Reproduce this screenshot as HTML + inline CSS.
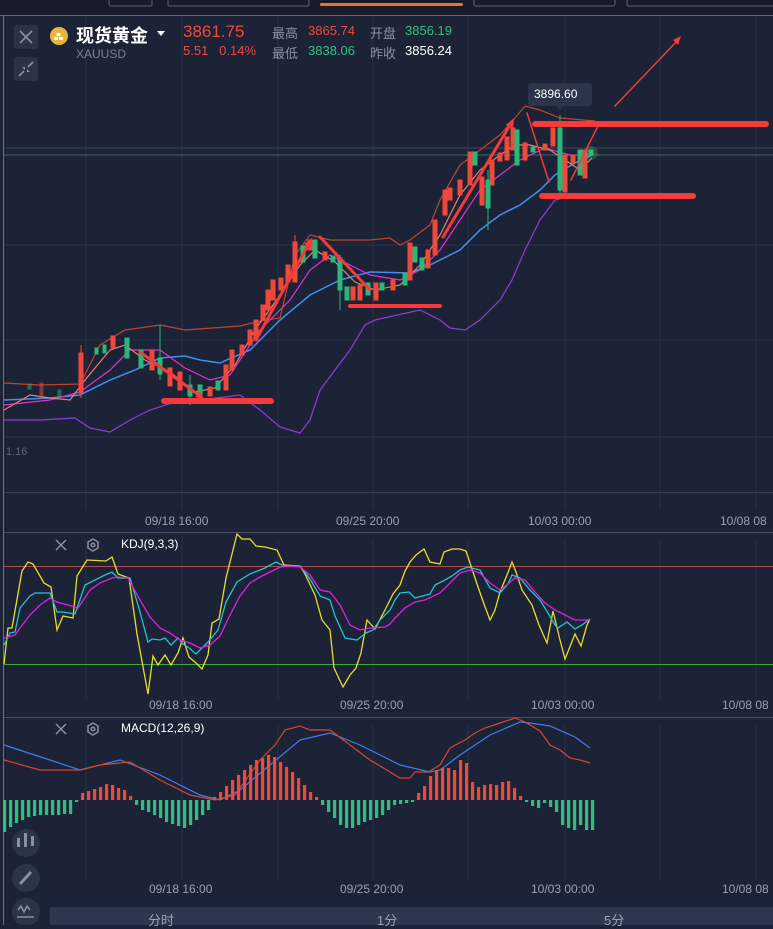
<!DOCTYPE html>
<html><head><meta charset="utf-8"><style>
*{margin:0;padding:0;box-sizing:border-box}
body{width:773px;height:925px;overflow:hidden;background:#1d2336;font-family:"Liberation Sans","Noto Sans CJK SC",sans-serif;position:relative}
.a{position:absolute;white-space:nowrap}
</style></head><body>
<svg class="a" style="left:0;top:0" width="773" height="925" xmlns="http://www.w3.org/2000/svg">
<rect x="0" y="0" width="773" height="15" fill="#181c2a"/>
<g fill="none" stroke="#4d5468" stroke-width="1.3">
<path d="M109 0V4a2 2 0 0 0 2 2H150a2 2 0 0 0 2-2V0"/>
<path d="M168 0V4a2 2 0 0 0 2 2H307a2 2 0 0 0 2-2V0"/>
<path d="M474 0V4a2 2 0 0 0 2 2H613a2 2 0 0 0 2-2V0"/>
<path d="M627 0V4a2 2 0 0 0 2 2H773"/>
</g>
<rect x="320" y="3" width="143" height="3" rx="1.5" fill="#e8742e"/>
<line x1="0" y1="15.5" x2="773" y2="15.5" stroke="#9a5a34" stroke-width="1"/>
<line x1="3.5" y1="15" x2="3.5" y2="925" stroke="#a8603a" stroke-width="1"/>
<g stroke="#2b3246" stroke-width="1">
<path d="M86 16V510M182 16V510M278 16V510M373 16V510M468 16V510M565 16V510M660 16V510M756 16V510"/>
<path d="M86 540V700M182 540V700M278 540V700M373 540V700M468 540V700M565 540V700M660 540V700M756 540V700"/>
<path d="M86 725V880M182 725V880M278 725V880M373 725V880M468 725V880M565 725V880M660 725V880M756 725V880"/>
<path d="M4 245H773M4 340H773M4 437H773"/>
</g>
<line x1="4" y1="148" x2="773" y2="148" stroke="#3c4458"/>
<line x1="4" y1="155" x2="773" y2="155" stroke="#3d6a68"/>
<line x1="4" y1="492.5" x2="773" y2="492.5" stroke="#3a4155"/>
<line x1="4" y1="532.5" x2="773" y2="532.5" stroke="#4a5063"/>
<line x1="4" y1="717.5" x2="773" y2="717.5" stroke="#4a5063"/>
<g fill="none" stroke-width="1.2">
<polyline stroke="#c0442c" points="4,383 40,385 80,384 100,345 125,330 160,325 185,330 240,326 265,320 280,318 295,255 310,235 330,240 370,240 390,238 400,245 410,240 430,225 440,200 460,165 480,150 500,135 515,118 525,106 540,110 560,118 595,121"/>
<polyline stroke="#8a3fd6" points="4,420 40,420 75,418 90,428 110,432 130,420 150,410 175,402 200,400 240,395 260,410 280,427 300,433 310,420 320,390 350,350 365,325 375,320 420,310 440,320 450,328 465,330 480,320 500,300 512,280 525,250 540,220 555,200 575,195"/>
<polyline stroke="#3f8ff0" stroke-width="1.5" points="4,400 50,398 80,395 110,380 135,370 160,358 185,356 200,360 220,363 250,350 280,320 310,295 340,280 370,272 410,273 430,265 460,250 480,230 500,215 520,205 540,190 555,175 575,163 592,155"/>
<polyline stroke="#e030d0" points="4,405 50,400 80,392 110,370 130,350 160,350 185,368 210,380 230,375 260,330 290,300 310,270 330,255 350,265 370,275 400,280 420,270 440,250 460,220 480,190 500,175 520,160 545,148 570,155 592,155"/>
<polyline stroke="#e58070" points="4,410 30,395 50,398 70,400 85,380 110,350 125,345 145,360 170,372 195,392 215,388 235,365 255,330 280,295 300,265 315,250 335,262 355,282 375,290 400,285 420,265 440,235 460,195 480,170 500,155 515,145 530,145 550,150 565,160 580,170 592,158"/>
</g>
<g stroke-width="1">
<g fill="#f0493c" stroke="#f0493c">
<line x1="81" y1="345" x2="81" y2="398"/><rect x="79" y="353" width="4" height="40"/>
<rect x="111" y="336" width="4" height="12"/><rect x="150" y="350" width="4" height="20"/>
<rect x="168" y="368" width="4" height="18"/><rect x="178" y="372" width="4" height="18"/>
<rect x="208" y="387" width="4" height="9"/><rect x="224" y="365" width="4" height="25"/>
<rect x="230" y="350" width="4" height="20"/><rect x="240" y="345" width="4" height="10"/>
<rect x="248" y="330" width="4" height="15"/><rect x="254" y="320" width="4" height="20"/>
<rect x="261" y="305" width="4" height="15"/><rect x="266" y="290" width="4" height="20"/>
<rect x="271" y="280" width="4" height="20"/><rect x="279" y="278" width="4" height="12"/>
<rect x="286" y="265" width="4" height="17"/><rect x="293" y="242" width="4" height="40"/>
<line x1="295" y1="235" x2="295" y2="282"/>
<rect x="308" y="240" width="4" height="10"/><rect x="323" y="252" width="4" height="8"/>
<rect x="351" y="287" width="4" height="13"/><rect x="358" y="285" width="4" height="15"/>
<rect x="374" y="283" width="4" height="17"/><rect x="391" y="280" width="4" height="10"/>
<rect x="408" y="243" width="4" height="37"/><rect x="426" y="250" width="4" height="18"/>
<rect x="433" y="220" width="4" height="35"/><rect x="443" y="190" width="4" height="25"/>
<rect x="448" y="188" width="4" height="12"/><rect x="458" y="180" width="4" height="15"/>
<rect x="468" y="152" width="4" height="33"/><rect x="480" y="177" width="4" height="28"/>
<rect x="490" y="160" width="4" height="25"/><rect x="498" y="153" width="4" height="8"/>
<rect x="505" y="137" width="4" height="23"/><rect x="511" y="128" width="4" height="22"/>
<rect x="523" y="143" width="4" height="17"/><rect x="543" y="144" width="4" height="6"/>
<rect x="551" y="128" width="4" height="18"/><rect x="563" y="155" width="4" height="37"/>
<rect x="571" y="155" width="4" height="8"/><rect x="583" y="150" width="4" height="28"/>
<rect x="40" y="383" width="3" height="15" opacity=".5"/>
</g>
<g fill="#29b77a" stroke="#29b77a">
<rect x="125" y="338" width="4" height="20"/><rect x="139" y="350" width="4" height="18"/>
<line x1="160" y1="325" x2="160" y2="380"/><rect x="158" y="358" width="4" height="16"/>
<line x1="190" y1="375" x2="190" y2="405"/><rect x="188" y="385" width="4" height="11"/>
<rect x="198" y="385" width="4" height="10"/><rect x="216" y="381" width="4" height="9"/>
<rect x="301" y="246" width="4" height="16"/><rect x="313" y="240" width="4" height="18"/>
<rect x="331" y="256" width="4" height="6"/><line x1="340" y1="255" x2="340" y2="310"/>
<rect x="338" y="258" width="4" height="32"/><rect x="345" y="287" width="4" height="13"/>
<rect x="366" y="283" width="4" height="12"/><rect x="380" y="283" width="4" height="7"/>
<rect x="403" y="273" width="4" height="12"/><rect x="413" y="247" width="4" height="15"/>
<rect x="420" y="258" width="4" height="12"/><rect x="473" y="152" width="4" height="13"/>
<line x1="488" y1="170" x2="488" y2="230"/><rect x="486" y="180" width="4" height="28"/>
<rect x="515" y="130" width="4" height="35"/><rect x="531" y="147" width="4" height="5"/>
<line x1="560" y1="115" x2="560" y2="195"/><rect x="558" y="128" width="4" height="62"/>
<rect x="578" y="150" width="4" height="25"/><rect x="589" y="150" width="4" height="5"/>
<rect x="28" y="384" width="3" height="5" opacity=".5"/><rect x="58" y="390" width="3" height="6" opacity=".5"/>
<rect x="95" y="348" width="3" height="6"/><rect x="103" y="345" width="3" height="8"/>
</g>
</g>
<circle cx="591" cy="153" r="7" fill="#3ad070" opacity=".25"/>
<g stroke="#f43a3a" stroke-linecap="round" fill="none">
<path d="M535 124H766M542 196H693" stroke-width="6"/>
<path d="M350 306H440" stroke-width="4"/>
<path d="M164 401H271" stroke-width="6"/>
<path d="M140 352L200 396M256 340L308 245M443 237L510 125M320 237L370 290" stroke-width="3"/>
<path d="M527 113L549 182M571 180L600 122M615 106L678 40" stroke-width="1.5"/>
</g>
<g fill="#f43a3a"><path d="M204 399l-9-2 5-6z"/><path d="M312 238l-1 10-7-4z"/><path d="M514 118l-1 11-7-4z"/><path d="M681 36l-3 9-5-5z"/></g>
<rect x="528" y="83" width="64" height="23" rx="3" fill="#2c3449"/>
<path d="M556 106l4 5 4-5z" fill="#2c3449"/>
<line x1="4" y1="566.5" x2="773" y2="566.5" stroke="#b54a4a"/>
<line x1="4" y1="664.5" x2="773" y2="664.5" stroke="#3aa83a"/>
<g fill="none" stroke-width="1.3">
<polyline stroke="#e8dd2a" points="4,664 8,628 12,628 22,571 28,562 33,564 44,583 51,587 57,630 63,616 73,618 77,576 87,560 106,561 112,557 118,574 129,578 137,634 148,694 153,656 158,665 165,655 171,665 178,653 183,638 189,657 196,663 202,669 208,655 212,623 219,619 226,578 237,534 242,539 250,539 256,546 265,547 277,550 284,565 300,566 305,574 315,595 322,620 330,630 334,668 343,687 350,675 356,668 361,653 367,620 375,629 385,610 393,594 400,585 405,571 410,562 416,555 424,549 430,562 440,564 444,552 452,549 460,549 466,551 471,566 477,584 484,604 490,620 495,610 500,592 507,575 512,562 516,572 522,590 532,605 539,625 547,643 553,611 560,640 565,659 575,634 581,646 587,625 590,619"/>
<polyline stroke="#22c4d0" points="4,645 10,633 15,632 20,608 30,596 35,593 50,593 57,612 63,612 75,614 85,585 105,575 112,572 118,578 130,578 140,612 148,642 152,639 160,640 165,638 171,645 178,638 183,644 189,648 196,654 208,642 218,630 226,602 237,582 250,574 265,568 276,562 284,566 300,566 310,579 320,596 330,600 335,616 345,638 357,640 366,633 373,630 380,620 390,610 395,600 400,593 409,592 415,598 430,594 435,585 445,580 452,576 460,570 468,567 480,570 490,588 500,593 508,584 512,575 520,578 530,590 540,600 548,613 555,625 558,628 567,622 575,629 582,625 590,619"/>
<polyline stroke="#e020e0" points="4,638 15,635 20,628 30,615 40,605 50,598 57,602 68,605 78,608 90,590 100,583 112,578 118,577 128,578 140,600 150,617 160,628 170,633 180,640 190,643 200,648 210,645 220,636 230,615 240,596 250,583 260,577 270,572 280,567 290,566 300,567 310,575 320,590 330,592 340,605 350,625 360,630 370,628 385,627 390,624 395,618 405,608 415,602 425,600 440,593 450,583 460,573 470,570 480,573 490,583 500,590 508,584 515,578 525,580 535,592 545,603 555,610 565,615 575,620 590,620"/>
</g>
<g fill="none" stroke-width="1.2">
<polyline stroke="#3f7cf0" points="4,745 50,760 80,770 120,760 160,775 200,795 220,800 240,790 270,765 300,740 330,733 360,745 400,765 430,772 440,770 460,755 490,735 520,722 530,723 550,726 575,737 590,748"/>
<polyline stroke="#d8452e" points="4,760 40,770 80,770 100,765 130,762 160,780 190,795 215,800 235,795 260,760 275,745 285,730 300,726 310,730 330,730 350,745 370,760 400,778 410,778 415,772 428,772 440,765 450,748 465,740 475,733 485,728 500,723 515,718 525,722 540,731 550,745 560,750 570,758 580,760 590,763"/>
</g>
<g id="hist"></g>
<g fill="#2c3447"><circle cx="26" cy="843" r="14"/><circle cx="26" cy="878" r="14"/><circle cx="26" cy="912" r="14"/></g>
<g fill="#8a90a3"><rect x="17" y="838" width="3" height="9"/><rect x="24" y="833" width="3" height="14"/><rect x="31" y="836" width="3" height="10"/></g>
<path d="M20 884L31 872" stroke="#8a90a3" stroke-width="3"/>
<path d="M18 910l3-4 3 6 3-6 3 4M17 917H34" stroke="#8a90a3" stroke-width="1.5" fill="none"/>
<rect x="50" y="907" width="723" height="18" fill="#2d384f"/>
<rect x="14" y="25" width="24" height="24" rx="2" fill="#2b3244"/>
<path d="M20 31l12 12M32 31l-12 12" stroke="#8a90a0" stroke-width="1.6"/>
<rect x="14" y="57" width="24" height="24" rx="2" fill="#2b3244"/>
<path d="M19 76l5-5M33 62l-5 5" stroke="#8a90a0" stroke-width="1.6"/><path d="M22 67h3v3zM30 72h-3v-3z" fill="#8a90a0"/>
<circle cx="59" cy="36" r="9" fill="#e8b638"/>
<g fill="#fff"><rect x="54" y="37" width="4" height="3"/><rect x="59" y="37" width="4" height="3"/><rect x="56.5" y="33" width="4" height="3"/></g>
<path d="M157 31h8l-4 5z" fill="#fff"/>
<g stroke="#8a90a0" stroke-width="1.5" fill="none"><path d="M56 540l10 10M66 540l-10 10M56 724l10 10M66 724l-10 10"/><path d="M93 539l5 3v6l-5 3-5-3v-6z M93 723l5 3v6l-5 3-5-3v-6z"/><circle cx="93" cy="545" r="1.8"/><circle cx="93" cy="729" r="1.8"/></g>
</svg>
<div class="a" style="left:76px;top:22px;font-size:18px;color:#fff;font-weight:bold">现货黄金</div>
<div class="a" style="left:76px;top:47px;font-size:12px;color:#7d8394">XAUUSD</div>
<div class="a" style="left:183px;top:22px;font-size:17px;color:#f0493c">3861.75</div>
<div class="a" style="left:183px;top:43px;font-size:13px;color:#f0493c">5.51&nbsp;&nbsp;&nbsp;0.14%</div>
<div class="a" style="left:272px;top:23px;font-size:13px;color:#8a90a0">最高</div>
<div class="a" style="left:308px;top:23px;font-size:13px;color:#f0493c">3865.74</div>
<div class="a" style="left:370px;top:23px;font-size:13px;color:#8a90a0">开盘</div>
<div class="a" style="left:405px;top:23px;font-size:13px;color:#2fc07e">3856.19</div>
<div class="a" style="left:272px;top:43px;font-size:13px;color:#8a90a0">最低</div>
<div class="a" style="left:308px;top:43px;font-size:13px;color:#2fc07e">3838.06</div>
<div class="a" style="left:370px;top:43px;font-size:13px;color:#8a90a0">昨收</div>
<div class="a" style="left:405px;top:43px;font-size:13px;color:#fff">3856.24</div>
<div class="a" style="left:534px;top:87px;font-size:12px;color:#fff">3896.60</div>
<div class="a" style="left:6px;top:446px;font-size:11px;color:#5d6476">1.16</div>
<div class="a" style="left:145px;top:514px;font-size:12px;color:#9aa0b0">09/18 16:00</div>
<div class="a" style="left:336px;top:514px;font-size:12px;color:#9aa0b0">09/25 20:00</div>
<div class="a" style="left:528px;top:514px;font-size:12px;color:#9aa0b0">10/03 00:00</div>
<div class="a" style="left:720px;top:514px;font-size:12px;color:#9aa0b0">10/08 08</div>
<div class="a" style="left:121px;top:537px;font-size:12px;color:#fff">KDJ(9,3,3)</div>
<div class="a" style="left:149px;top:698px;font-size:12px;color:#9aa0b0">09/18 16:00</div>
<div class="a" style="left:340px;top:698px;font-size:12px;color:#9aa0b0">09/25 20:00</div>
<div class="a" style="left:531px;top:698px;font-size:12px;color:#9aa0b0">10/03 00:00</div>
<div class="a" style="left:722px;top:698px;font-size:12px;color:#9aa0b0">10/08 08</div>
<div class="a" style="left:121px;top:721px;font-size:12px;color:#fff">MACD(12,26,9)</div>
<div class="a" style="left:149px;top:882px;font-size:12px;color:#9aa0b0">09/18 16:00</div>
<div class="a" style="left:340px;top:882px;font-size:12px;color:#9aa0b0">09/25 20:00</div>
<div class="a" style="left:531px;top:882px;font-size:12px;color:#9aa0b0">10/03 00:00</div>
<div class="a" style="left:722px;top:882px;font-size:12px;color:#9aa0b0">10/08 08</div>
<div class="a" style="left:148px;top:910px;font-size:13px;color:#9aa0b0">分时</div>
<div class="a" style="left:377px;top:910px;font-size:13px;color:#9aa0b0">1分</div>
<div class="a" style="left:604px;top:910px;font-size:13px;color:#9aa0b0">5分</div>
<script>
var h=[-32,-27,-23,-20,-17,-16,-15,-15,-15,-15,-14,-14,-2,7,9,11,13,16,15,12,10,4,-5,-10,-12,-15,-18,-22,-24,-26,-28,-25,-20,-15,-10,3,8,14,20,25,30,35,40,42,45,43,38,33,28,22,15,8,3,-5,-12,-18,-25,-28,-28,-25,-22,-20,-18,-15,-10,-5,-4,-3,-2,7,14,24,30,32,32,30,40,37,18,13,15,16,15,18,19,12,4,-2,-6,-8,-3,-7,-12,-25,-28,-30,-25,-30,-30];
var s='';for(var i=0;i<h.length;i++){var x=3+6*i,v=h[i];s+='<rect x="'+x+'" y="'+(v>0?800-v:800)+'" width="3.2" height="'+Math.abs(v)+'" fill="'+(v>0?'#ee4a3c':'#2fbe7c')+'"/>';}
document.getElementById('hist').innerHTML=s;
</script>
</body></html>
